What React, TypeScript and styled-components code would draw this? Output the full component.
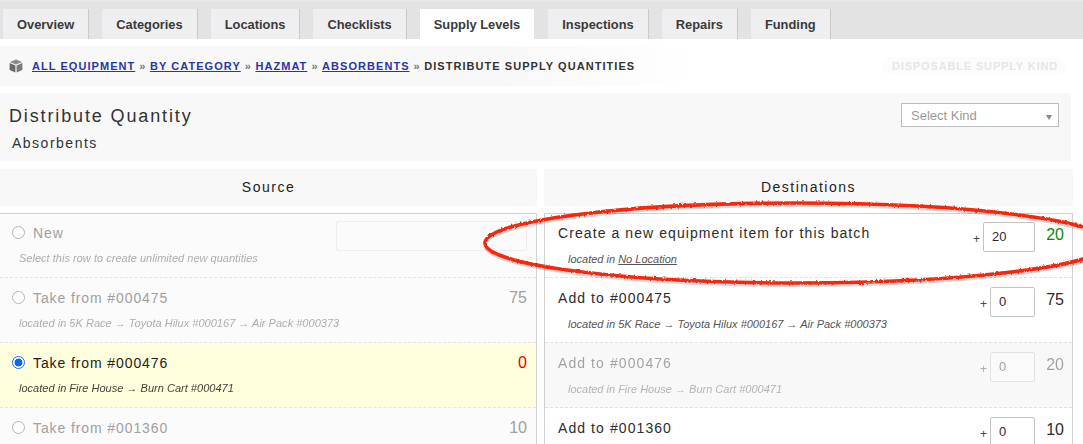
import React from 'react';
import styled, { createGlobalStyle } from 'styled-components';

interface SourceRowData {
  label: string;
  hint: string;
  qty?: string;
  selected?: boolean;
}

interface DestRowData {
  label: string;
  hint: React.ReactNode;
  amount: string;
  qty: string;
  disabled?: boolean;
  wide?: boolean;
  green?: boolean;
}

const tabs = [
  'Overview',
  'Categories',
  'Locations',
  'Checklists',
  'Supply Levels',
  'Inspections',
  'Repairs',
  'Funding',
];

const crumbs = ['ALL EQUIPMENT', 'BY CATEGORY', 'HAZMAT', 'ABSORBENTS'];

const sourceRows: SourceRowData[] = [
  { label: 'Take from #000475', hint: 'located in 5K Race → Toyota Hilux #000167 → Air Pack #000373', qty: '75' },
  { label: 'Take from #000476', hint: 'located in Fire House → Burn Cart #000471', qty: '0', selected: true },
  { label: 'Take from #001360', hint: '', qty: '10' },
];

const destRows: DestRowData[] = [
  {
    label: 'Create a new equipment item for this batch',
    hint: (
      <>
        located in <u>No Location</u>
      </>
    ),
    amount: '20',
    qty: '20',
    wide: true,
    green: true,
  },
  { label: 'Add to #000475', hint: 'located in 5K Race → Toyota Hilux #000167 → Air Pack #000373', amount: '0', qty: '75' },
  { label: 'Add to #000476', hint: 'located in Fire House → Burn Cart #000471', amount: '0', qty: '20', disabled: true },
  { label: 'Add to #001360', hint: '', amount: '0', qty: '10' },
];

const App = () => (
  <Page>
    <GlobalStyle />
    <TabBar>
      {tabs.map((tab) => (
        <Tab key={tab} $active={tab === 'Supply Levels'}>
          {tab}
        </Tab>
      ))}
    </TabBar>

    <Breadcrumb>
      <CubeIcon viewBox="0 0 14 14">
        <path d="M7 .6 L13.2 2.9 L7 5.4 L.8 2.9 Z" fill="#8a8a8a" />
        <path d="M.6 4 L6.4 6.4 L6.4 13.4 L.6 11 Z" fill="#6a6a6a" />
        <path d="M13.4 4 L7.6 6.4 L7.6 13.4 L13.4 11 Z" fill="#7a7a7a" />
      </CubeIcon>
      {crumbs.map((crumb) => (
        <React.Fragment key={crumb}>
          <CrumbLink href="#">{crumb}</CrumbLink>
          <CrumbSep>»</CrumbSep>
        </React.Fragment>
      ))}
      <CrumbCurrent>DISTRIBUTE SUPPLY QUANTITIES</CrumbCurrent>
      <KindBadge>DISPOSABLE SUPPLY KIND</KindBadge>
    </Breadcrumb>

    <TitlePanel>
      <div>
        <Title>Distribute Quantity</Title>
        <Subtitle>Absorbents</Subtitle>
      </div>
      <KindSelect>
        Select Kind
        <SelectCaret />
      </KindSelect>
    </TitlePanel>

    <Columns>
      <Column>
        <ColumnHeader>Source</ColumnHeader>
        <SourceList>
          <Row $muted>
            <RowTop>
              <Radio />
              <SourceLabel>New</SourceLabel>
              <NewInput />
            </RowTop>
            <SourceHint>Select this row to create unlimited new quantities</SourceHint>
          </Row>
          {sourceRows.map((row) => (
            <Row key={row.label} $muted={!row.selected} $selected={row.selected}>
              <RowTop>
                <Radio $checked={row.selected} />
                <SourceLabel>{row.label}</SourceLabel>
                <SourceQty $empty={row.qty === '0'}>{row.qty}</SourceQty>
              </RowTop>
              <SourceHint>{row.hint}</SourceHint>
            </Row>
          ))}
        </SourceList>
      </Column>

      <Column>
        <ColumnHeader>Destinations</ColumnHeader>
        <DestList>
          {destRows.map((row) => (
            <DestRow key={row.label} $disabled={row.disabled}>
              <DestMain>
                <DestLabel>{row.label}</DestLabel>
                <DestHint>{row.hint}</DestHint>
              </DestMain>
              <Plus>+</Plus>
              <AmountBox $wide={row.wide}>{row.amount}</AmountBox>
              <DestQty $green={row.green}>{row.qty}</DestQty>
            </DestRow>
          ))}
        </DestList>
      </Column>
    </Columns>

    <Annotation viewBox="0 0 1083 444" width="1083" height="444">
      <defs>
        <filter id="rough" x="-5%" y="-20%" width="110%" height="140%">
          <feTurbulence type="fractalNoise" baseFrequency="0.45" numOctaves="2" seed="4" result="noise" />
          <feDisplacementMap in="SourceGraphic" in2="noise" scale="2.8" />
        </filter>
      </defs>
      <ellipse cx="797" cy="245" rx="312" ry="40" fill="none" stroke="#000" strokeOpacity="0.14" strokeWidth="4" />
      <ellipse
        cx="797"
        cy="243"
        rx="312"
        ry="40"
        fill="none"
        stroke="#f8280a"
        strokeWidth="3.6"
        filter="url(#rough)"
      />
    </Annotation>
  </Page>
);

const GlobalStyle = createGlobalStyle`
  html, body {
    margin: 0;
    padding: 0;
    background: #fff;
    overflow: hidden;
  }
  * {
    box-sizing: border-box;
  }
`;

const Page = styled.div`
  position: relative;
  width: 1083px;
  height: 444px;
  overflow: hidden;
  color: #333;
  font-family: 'Liberation Sans', Arial, sans-serif;
`;

const TabBar = styled.div`
  display: flex;
  align-items: flex-end;
  gap: 14px;
  height: 39px;
  padding-left: 3px;
  background: linear-gradient(#ececec 0, #e3e3e3 3px);
`;

const Tab = styled.div<{ $active?: boolean }>`
  height: 30px;
  padding: 0 14px;
  display: flex;
  align-items: center;
  font-size: 12.87px;
  font-weight: bold;
  color: #3a3a3a;
  background: ${({ $active }) => ($active ? '#fff' : '#efeff1')};
  box-shadow: ${({ $active }) => ($active ? 'none' : '1px 0 0 #c9c9c9')};
`;

const Breadcrumb = styled.div`
  display: flex;
  align-items: center;
  height: 40px;
  margin-top: 7px;
  padding: 0 17px 0 9px;
  font-size: 11px;
  font-weight: bold;
  letter-spacing: 1.05px;
  background: linear-gradient(90deg, #f8f8f8 0, #f8f8f8 500px, #fff 700px);
`;

const CubeIcon = styled.svg`
  width: 14px;
  height: 14px;
  margin-right: 9px;
`;

const CrumbLink = styled.a`
  color: #2a35a8;
`;

const CrumbSep = styled.span`
  margin: 0 3.5px 0 4px;
  color: #777;
`;

const CrumbCurrent = styled.span`
  color: #333;
`;

const KindBadge = styled.span`
  margin-left: auto;
  padding: 3px 8px 3px 11px;
  border-radius: 10px;
  background: #fcfcfc;
  color: #e6e6e6;
  letter-spacing: 0.85px;
`;

const TitlePanel = styled.div`
  display: flex;
  justify-content: space-between;
  align-items: flex-start;
  width: 1071px;
  height: 68px;
  margin-top: 7px;
  padding: 13px 12px 0 9px;
  background: #f8f8f8;
`;

const Title = styled.div`
  font-size: 18px;
  line-height: 20px;
  letter-spacing: 1.87px;
  color: #333;
`;

const Subtitle = styled.div`
  margin: 9px 0 0 3px;
  font-size: 14px;
  line-height: 16px;
  letter-spacing: 1.5px;
  color: #333;
`;

const KindSelect = styled.div`
  position: relative;
  width: 158px;
  height: 24px;
  margin-top: -3px;
  padding-left: 9px;
  border: 1px solid #bdbdbd;
  background: #fff;
  color: #999;
  font-size: 13px;
  line-height: 23px;
`;

const SelectCaret = styled.span`
  position: absolute;
  right: 6px;
  top: 11px;
  border-left: 3px solid transparent;
  border-right: 3px solid transparent;
  border-top: 5px solid #888;
`;

const Columns = styled.div`
  display: grid;
  grid-template-columns: 537px 529px;
  column-gap: 7px;
  margin-top: 8px;
`;

const Column = styled.div`
  min-width: 0;
`;

const ColumnHeader = styled.div`
  height: 37px;
  margin-bottom: 7px;
  background: #f8f8f8;
  text-align: center;
  font-size: 14px;
  line-height: 37px;
  letter-spacing: 1.5px;
  color: #222;
`;

const SourceList = styled.div`
  border: 1px solid #cfcfcf;
  border-left: none;
`;

const DestList = styled.div`
  border: 1px solid #cfcfcf;
`;

const Row = styled.div<{ $muted?: boolean; $selected?: boolean }>`
  height: 65px;
  padding: 9px 9px 0 12px;
  border-bottom: 1px dashed #e4e4e4;
  background: ${({ $selected }) => ($selected ? '#ffffdd' : '#fbfbfb')};
  color: ${({ $muted }) => ($muted ? '#a0a0a0' : '#222')};

  &:first-child {
    height: 64px;
    padding-top: 8px;
  }
`;

const RowTop = styled.div`
  display: flex;
  align-items: center;
  height: 22px;
`;

const Radio = styled.span<{ $checked?: boolean }>`
  flex: none;
  width: 13px;
  height: 13px;
  margin: -1px 8px 0 0;
  border-radius: 50%;
  border: 1px solid ${({ $checked }) => ($checked ? '#1b6ff5' : '#b5b5b5')};
  background: ${({ $checked }) =>
    $checked ? 'radial-gradient(circle, #1166f0 0 3.6px, #fff 4.3px)' : '#fff'};
`;

const SourceLabel = styled.span`
  font-size: 14px;
  letter-spacing: 0.9px;
`;

const NewInput = styled.span`
  display: block;
  width: 191px;
  height: 30px;
  margin: 6px 0 0 auto;
  border: 1px solid #eeeeee;
  border-radius: 2px;
  background: #fbfbfb;
`;

const SourceQty = styled.span<{ $empty?: boolean }>`
  margin-left: auto;
  font-size: 16px;
  color: ${({ $empty }) => ($empty ? '#ee0000' : 'inherit')};
`;

const SourceHint = styled.div`
  margin: 7px 0 0 7px;
  font-size: 11px;
  font-style: italic;
  line-height: 14px;
  letter-spacing: 0.02px;
  opacity: 0.85;
`;

const DestRow = styled.div<{ $disabled?: boolean }>`
  display: flex;
  height: 65px;
  padding: 9px 8px 0 13px;
  border-bottom: 1px dashed #e0e0e0;
  background: ${({ $disabled }) => ($disabled ? '#f8f8f8' : '#fff')};
  color: #2c2c2c;

  & > * {
    opacity: ${({ $disabled }) => ($disabled ? 0.42 : 1)};
  }

  &:first-child {
    height: 64px;
    padding-top: 8px;
  }
`;

const DestMain = styled.div`
  flex: 1;
  min-width: 0;
  padding-top: 2px;
`;

const DestLabel = styled.span`
  font-size: 14px;
  letter-spacing: 1.08px;
`;

const DestHint = styled.div`
  margin: 10px 0 0 10px;
  font-size: 11px;
  font-style: italic;
  line-height: 14px;
  color: #555;
`;

const Plus = styled.span`
  align-self: flex-start;
  margin: 10px 3px 0 0;
  font-size: 12px;
  color: #444;
`;

const AmountBox = styled.span<{ $wide?: boolean }>`
  width: ${({ $wide }) => ($wide ? '52px' : '45px')};
  height: 30px;
  padding-left: 8px;
  border: 1px solid #c4c4c4;
  border-radius: 2px;
  background: #fff;
  font-size: 13px;
  line-height: 28px;
`;

const DestQty = styled.span<{ $green?: boolean }>`
  width: 29px;
  padding-top: 4px;
  text-align: right;
  font-size: 16px;
  color: ${({ $green }) => ($green ? '#0a870a' : 'inherit')};
`;

const Annotation = styled.svg`
  position: absolute;
  left: 0;
  top: 0;
  pointer-events: none;
`;

export default App;
